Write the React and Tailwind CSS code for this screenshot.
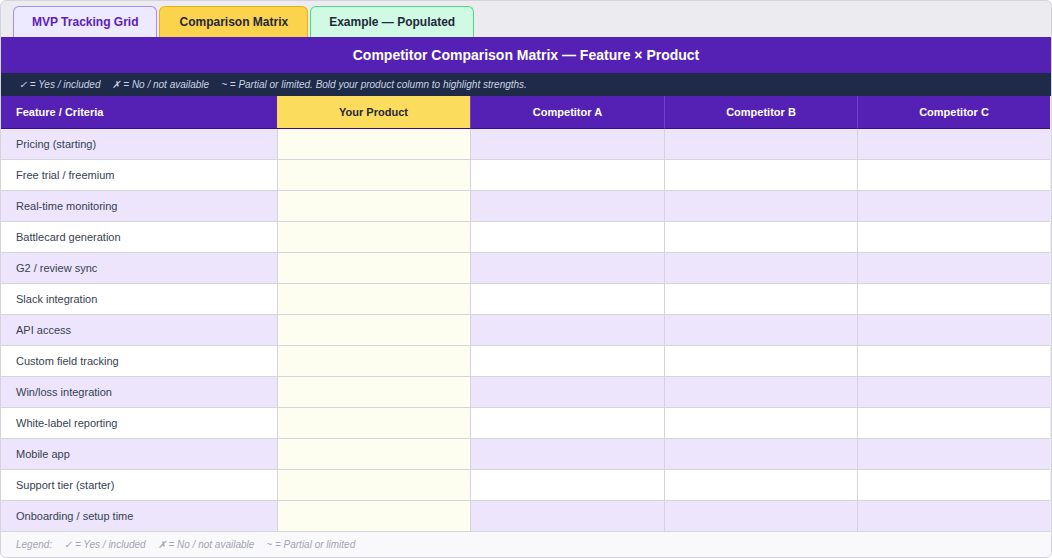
const rows = [
  "Pricing (starting)",
  "Free trial / freemium",
  "Real-time monitoring",
  "Battlecard generation",
  "G2 / review sync",
  "Slack integration",
  "API access",
  "Custom field tracking",
  "Win/loss integration",
  "White-label reporting",
  "Mobile app",
  "Support tier (starter)",
  "Onboarding / setup time",
];

export default function App() {
  return (
    <div className="w-[1052px] h-[558px] bg-white" style={{ fontFamily: "'Liberation Sans', Arial, sans-serif" }}>
      <div className="h-[558px] border border-[#d4d4dc] rounded-md bg-[#ecebf0] overflow-hidden flex flex-col">
        <div className="flex gap-[2px] pl-3 pt-1 h-[36px] items-end">
          <div className="h-[31px] px-[18px] flex items-center rounded-t-md border border-b-0 border-[#a78bfa] bg-[#ede9fe] text-[#5b21b6] text-[12px] font-bold">MVP Tracking Grid</div>
          <div className="h-[31px] px-[19px] flex items-center rounded-t-md border border-b-0 border-[#eab308] bg-[#fcd34d] text-[#1f2937] text-[12px] font-bold">Comparison Matrix</div>
          <div className="h-[31px] px-[18px] flex items-center rounded-t-md border border-b-0 border-[#4ade80] bg-[#d1fae5] text-[#1e293b] text-[12px] font-bold">Example — Populated</div>
        </div>
        <div className="h-[36px] bg-[#5521b5] text-white text-[14px] font-bold flex items-center justify-center">
          Competitor Comparison Matrix — Feature × Product
        </div>
        <div className="h-[23px] bg-[#1e2a48] text-[#cbd5e1] text-[10px] italic flex items-center pl-[18px] gap-3">
          <span>✓ = Yes / included</span>
          <span>✗ = No / not available</span>
          <span>~ = Partial or limited. Bold your product column to highlight strengths.</span>
        </div>
        <div className="grid grid-cols-[276px_193px_194px_193px_193px] text-[11px]">
          <div className="h-[33px] bg-[#5521b5] text-white font-bold flex items-center pl-[15px] border-b border-[#3b0d8c]">Feature / Criteria</div>
          <div className="h-[33px] bg-[#fcdc5c] text-[#1f2937] font-bold flex items-center justify-center border-b border-[#3b0d8c]">Your Product</div>
          {["Competitor A", "Competitor B", "Competitor C"].map((c) => (
            <div key={c} className="h-[33px] bg-[#5521b5] text-white font-bold flex items-center justify-center border-l border-[#6d3fd0] border-b border-b-[#3b0d8c]">{c}</div>
          ))}
          {rows.map((r, i) => {
            const bg = i % 2 === 0 ? "bg-[#ece5fc]" : "bg-white";
            return [
              <div key={r} className={`h-[31px] ${bg} text-[#374151] flex items-center pl-[15px] border-b border-[#d4d4dc]`}>{r}</div>,
              <div key={r + "p"} className="h-[31px] bg-[#fefef0] border-l border-b border-[#d4d4dc]" />,
              <div key={r + "a"} className={`h-[31px] ${bg} border-l border-b border-[#d4d4dc]`} />,
              <div key={r + "b"} className={`h-[31px] ${bg} border-l border-b border-[#d4d4dc]`} />,
              <div key={r + "c"} className={`h-[31px] ${bg} border-l border-b border-[#d4d4dc]`} />,
            ];
          })}
        </div>
        <div className="flex-1 bg-[#f9f9fb] text-[#a3a3b3] text-[10px] italic flex items-center pl-[15px] gap-3">
          <span>Legend:</span>
          <span>✓ = Yes / included</span>
          <span>✗ = No / not available</span>
          <span>~ = Partial or limited</span>
        </div>
      </div>
    </div>
  );
}
